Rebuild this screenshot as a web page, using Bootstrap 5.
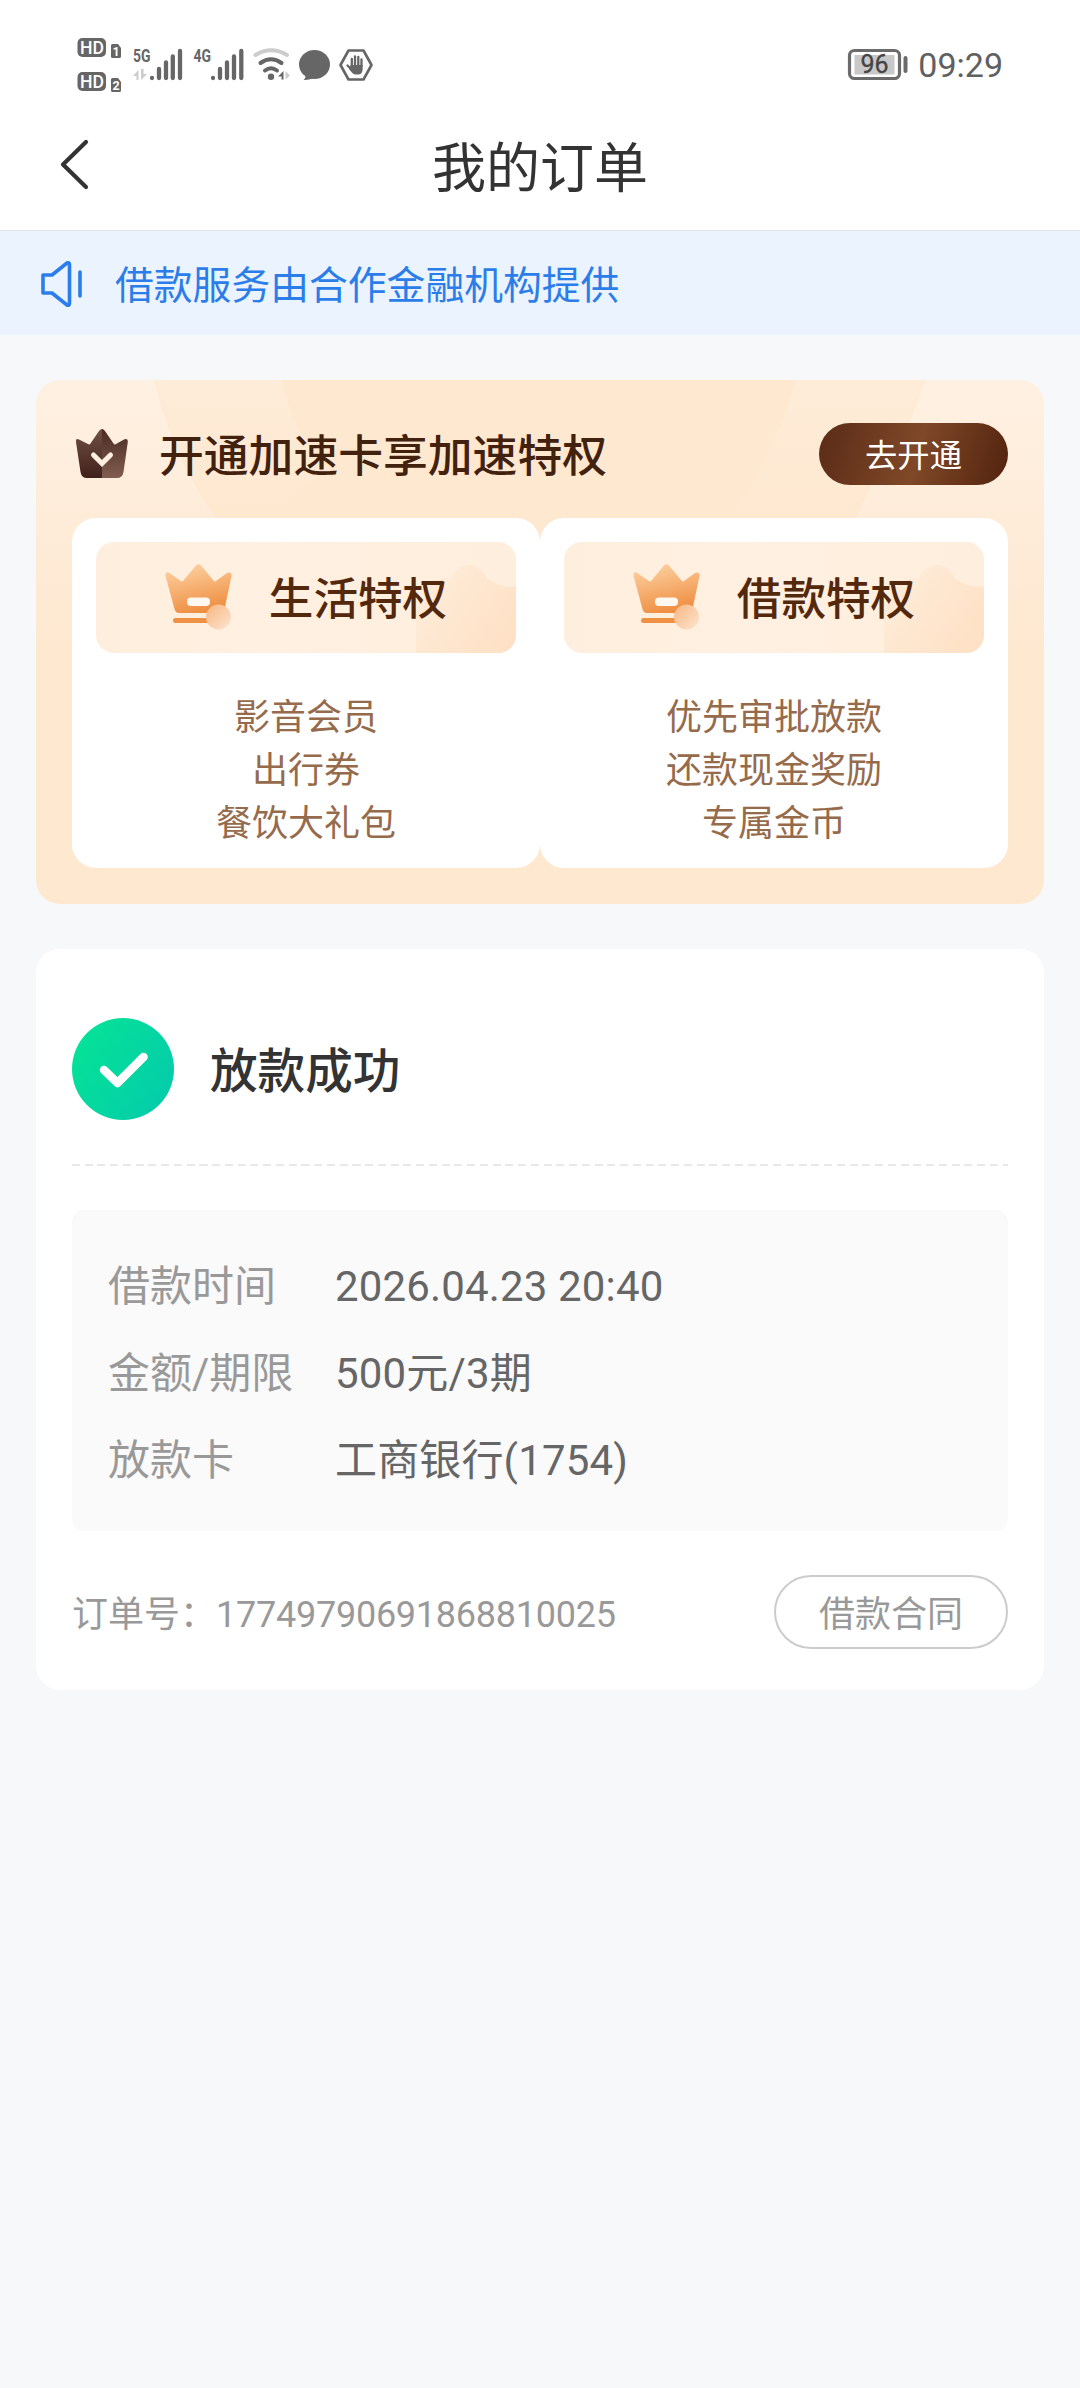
<!DOCTYPE html>
<html lang="zh-CN">
<head>
<meta charset="utf-8">
<meta name="viewport" content="width=device-width, initial-scale=1">
<title>我的订单</title>
<link href="https://cdn.jsdelivr.net/npm/bootstrap@5.3.0/dist/css/bootstrap.min.css" rel="stylesheet">
<style>
body{font-family:Roboto,"Noto Sans CJK SC",sans-serif;background:#f6f8fa;color:#333;min-height:2388px;line-height:1}
svg{display:block;flex:none}
.status-bar{height:110px;padding:20px 77px 0 60px;color:#666}
.clock{font-size:34px;line-height:91px;color:#606060}
.title-bar{height:121px;border-bottom:1px solid #dde4ec;padding:0 60px}
.title-bar h1{font-size:54px;line-height:80px;color:#333;margin-top:20px}
.title-bar .side{width:40px}
.title-bar .side svg{margin-top:27px}
.notice{height:104px;background:#eaf3fe;color:#2b7de9;padding-left:40px;font-size:38.8px}
.notice svg{margin-top:3px}
.notice span{margin-left:31px}
.page-body{padding:45px 36px 0}
.promo{height:524px;border-radius:24px;background:#fee8d0;padding:43px 36px 36px}
.promo-bg{top:0;left:0}
.promo-head{height:62px;margin-bottom:33px}
.promo-title{font-size:44.8px;font-weight:500;color:#42210f;margin-left:31px}
.btn-open{width:189px;height:62px;font-size:32.3px;color:#fff;background:linear-gradient(105deg,#5c2c18 2%,#7f4828 52%,#54240f 98%)}
.perk{height:350px;border-radius:24px;padding:24px}
.perk-head{height:111px;border-radius:18px;background:linear-gradient(90deg,#feeedd,#fff0e1 40%,#feeedd);margin-bottom:39px}
.perk-head strong{font-size:44.6px;font-weight:500;color:#54280c;margin-left:36px}
.perk-list{font-size:36px;line-height:53px;color:#966b4c}
.order{height:741px;border-radius:24px;margin-top:45px;padding:69px 36px 0}
.order h2{font-size:47.6px;font-weight:500;color:#333;margin-left:36px}
.dash{height:2px;background:repeating-linear-gradient(90deg,#e9e9e9 0 8px,transparent 8px 12.75px);margin:44px 0}
.info{height:321px;border-radius:12px;background:#fafafa;padding:33px 36px 0;font-size:42px}
.info dt{width:227px;font-weight:400;color:#999}
.info dd{color:#666;letter-spacing:.15px}
.info .line{height:87px}
.order-no{font-size:36px;color:#999}
.order-no .num{letter-spacing:-.25px}
.btn-contract{width:234px;height:74px;border:2px solid #ccc;font-size:36px;color:#999;background:#fff}
.order-foot{margin-top:44px}
.lh-box{line-height:1.4;padding-top:6px}
.btn.pt-label{padding:5px 0 0}
</style>
</head>
<body>
<svg width="0" height="0" class="position-absolute">
  <defs>
    <linearGradient id="crownFill" x1=".3" y1="0" x2=".6" y2="1"><stop offset="0" stop-color="#fdd0a0"/><stop offset="1" stop-color="#ee8c3e"/></linearGradient>
    <linearGradient id="coinFill" x1="0" y1="0" x2="1" y2="1"><stop offset="0" stop-color="#f7b682"/><stop offset="1" stop-color="#fee5cf"/></linearGradient>
    <linearGradient id="cloudFill" x1="0" y1=".2" x2="1" y2=".8"><stop offset="0" stop-color="#feedda"/><stop offset=".5" stop-color="#fee6cf"/><stop offset="1" stop-color="#fee1c5"/></linearGradient>
    <g id="crown">
      <path d="M3.5 8.5 L16 17 Q17.500 18 18.500 16.500 L31 1.500 Q33.500 -1 36 1.500 L48.500 16.500 Q49.500 18 51 17 L62 9 Q67 7 66.500 12 L59.500 45 Q58.500 49 55 49 H14 Q10.500 49 9.500 45 L0.500 12 Q0 7.500 3.500 8.500Z" fill="url(#crownFill)"/>
      <rect x="22" y="33.500" width="23" height="8.500" rx="4" fill="#fff8f1"/>
      <rect x="8" y="54" width="40" height="5" rx="2.500" fill="#ef9145"/>
      <circle cx="53.500" cy="53" r="12.500" fill="url(#coinFill)"/>
    </g>
    <g id="perkShade">
      <path d="M320 111 V70 Q335 30 354 37 Q362 22 375 23 Q386 25 391 37 Q405 45 420 44 V111Z" fill="url(#cloudFill)"/>
      <circle cx="414" cy="12" r="33" fill="#feeddd" opacity=".8"/>
    </g>
  </defs>
</svg>

<header class="bg-white">
  <div class="status-bar d-flex justify-content-between">
    <div class="d-flex">
      <svg width="66" height="90" viewBox="0 0 66 90" fill="#666" font-family="Roboto" font-weight="700">
        <rect x="17.500" y="18" width="28.500" height="19" rx="5"/><rect x="17.500" y="52" width="28.500" height="19" rx="5"/>
        <path d="M52.500 24H58L61 28V36.500Q61 38 59.500 38H52.500Q51 38 51 36.500V25.500Q51 24 52.500 24ZM52.500 58H58L61 62V70.500Q61 72 59.500 72H52.500Q51 72 51 70.500V59.500Q51 58 52.500 58Z"/>
        <g fill="#fff"><text x="20" y="33.500" font-size="17.500" font-weight="500" textLength="24" lengthAdjust="spacingAndGlyphs">HD</text><text x="20" y="67.500" font-size="17.500" font-weight="500" textLength="24" lengthAdjust="spacingAndGlyphs">HD</text><text x="52.500" y="35.800" font-size="12.500">1</text><text x="52.600" y="69.800" font-size="12.500">2</text></g>
      </svg>
      <svg width="62" height="90" viewBox="66 0 62 90" fill="#666">
        <text x="73" y="42" font-family="Roboto" font-weight="700" font-size="19" textLength="17.500" lengthAdjust="spacingAndGlyphs">5G</text>
        <path d="M78.500 60V50L73 56H76.500V60ZM81 49V60L87 54H83.500V49Z" fill="#ccc"/>
        <path d="M92 58V58.100M99 49V58M106 42.500V58M112.800 36.500V58M120 31V58" stroke="#666" stroke-width="4.300" stroke-linecap="round"/>
      </svg>
      <svg width="60" height="90" viewBox="128 0 60 90" fill="#666">
        <text x="133.500" y="42" font-family="Roboto" font-weight="700" font-size="19" textLength="17.500" lengthAdjust="spacingAndGlyphs">4G</text>
        <path d="M153 58V58.100M160 49V58M167 42.500V58M174 36.500V58M181.300 31V58" stroke="#666" stroke-width="4.300" stroke-linecap="round"/>
      </svg>
      <svg width="46" height="90" viewBox="188 0 46 90" fill="none" stroke-linecap="round">
        <path d="M195.500 35Q211 25.500 227 35" stroke="#ccc" stroke-width="4"/>
        <path d="M200.500 43Q211 35.500 221.500 43M205 50.500Q211 46 217 50.500" stroke="#666" stroke-width="4"/>
        <circle cx="211" cy="56.700" r="3.200" fill="#666"/>
        <path d="M223.500 51V59.500H221.500V56.500H218Z" fill="#666"/><path d="M225.500 51V59.500L230 55.500Z" fill="#ccc"/>
      </svg>
      <svg width="40" height="90" viewBox="234 0 40 90" fill="#666"><ellipse cx="254.500" cy="44.500" rx="15.500" ry="14.500"/><path d="M244 52 Q247 57 243.500 60 Q252 60 257 56Z"/></svg>
      <svg width="56" height="90" viewBox="274 0 56 90" fill="none" stroke="#666" stroke-linecap="round" stroke-linejoin="round">
        <path d="M288.500 30.500H303.500L311.500 45L303.500 59.500H288.500L280.500 45Z" stroke-width="2.600"/>
        <path d="M291.800 46V39M295 45V36.500M298.300 45V37M301.500 46V39.500M287.500 45.500L292 50" stroke-width="2.300"/>
        <path d="M290.700 45H302.600V49Q302.600 54.500 298 54.500H295.500Q293 54.500 289 49Z" fill="#666" stroke="none"/>
      </svg>
    </div>
    <div class="d-flex">
      <svg width="89" height="90" viewBox="0 0 89 90">
        <rect x="20.500" y="30.500" width="50" height="28" rx="5" fill="#fff" stroke="#6b6b6b" stroke-width="3.200"/><rect x="25.500" y="35" width="40" height="19.500" fill="#c8c8c8"/>
        <text x="45.500" y="53" text-anchor="middle" font-family="Roboto" font-size="25" fill="#444" stroke="#444" stroke-width=".3">96</text>
        <rect x="74.500" y="36" width="4" height="17" rx="2" fill="#6b6b6b"/>
      </svg>
      <span class="clock">09:29</span>
    </div>
  </div>
  <nav class="title-bar d-flex justify-content-between">
    <div class="side"><svg width="32" height="54" viewBox="0 0 32 54" fill="none" stroke="#333" stroke-width="4.200" stroke-linecap="round" stroke-linejoin="round"><path d="M26 5L3 27.500L26 50"/></svg></div>
    <h1 class="mb-0 fw-normal">我的订单</h1>
    <div class="side"></div>
  </nav>
</header>

<div class="notice d-flex align-items-center">
  <svg width="44" height="50" viewBox="0 0 44 50" fill="none" stroke="#2b7de9" stroke-width="3.600" stroke-linecap="round" stroke-linejoin="round"><path d="M3 15H12L27 3Q29.500 2 29.500 5V43Q29.500 46 27 45L12 33H3Z"/><path d="M40 12V36"/></svg>
  <span class="lh-box text-nowrap">借款服务由合作金融机构提供</span>
</div>

<main class="page-body">
  <section class="promo position-relative overflow-hidden">
    <svg class="promo-bg position-absolute" width="1008" height="524" viewBox="0 0 1008 524">
      <defs>
        <linearGradient id="fadeDown" x1="0" y1="0" x2="0" y2="1"><stop offset="0" stop-color="#fff5ec" stop-opacity=".65"/><stop offset="1" stop-color="#fff5ec" stop-opacity="0"/></linearGradient>
        <linearGradient id="rayDown" x1="0" y1="0" x2="0" y2="1"><stop offset="0" stop-color="#fff3e6" stop-opacity=".38"/><stop offset="1" stop-color="#fff3e6" stop-opacity="0"/></linearGradient>
      </defs>
      <path d="M0 0H118Q135 75 180 138L240 270H0Z" fill="url(#fadeDown)"/>
      <path d="M118 0H246Q256 50 290 90L240 130H176Q135 75 118 0Z" fill="url(#rayDown)"/>
      <path d="M1008 0H890Q870 60 835 105L760 270H1008Z" fill="url(#fadeDown)"/>
      <path d="M890 0H760Q740 75 690 138H810Q870 70 890 0Z" fill="url(#rayDown)"/>
    </svg>
    <div class="promo-head position-relative d-flex align-items-center">
      <svg width="56" height="52" viewBox="0 0 56 52">
        <defs><linearGradient id="darkL" x1="0" y1="0" x2="0" y2="1"><stop offset="0" stop-color="#705044"/><stop offset="1" stop-color="#40201a"/></linearGradient><linearGradient id="darkR" x1="0" y1="0" x2="0" y2="1"><stop offset="0" stop-color="#4b2b21"/><stop offset="1" stop-color="#805d50"/></linearGradient></defs>
        <path d="M30 1Q28.500 1 27 3L18.500 15.500Q17.500 17 16 16L7 11.500Q3.500 10 4 14L8.500 44Q9.500 50 15 50H30Z" fill="url(#darkL)"/>
        <path d="M30 1Q31.500 1 33 3L41.500 15.500Q42.500 17 44 16L52 11.500Q56 10 55.800 14L51.500 44Q50.500 50 45 50H30Z" fill="url(#darkR)"/>
        <path d="M21.500 27L30 35.500L38.500 27" fill="none" stroke="#feefe1" stroke-width="5" stroke-linecap="round"/>
      </svg>
      <span class="promo-title lh-box text-nowrap">开通加速卡享加速特权</span>
      <button type="button" class="btn btn-open rounded-pill border-0 pt-label ms-auto">去开通</button>
    </div>
    <div class="row g-0 position-relative">
      <div class="col-6"><div class="perk bg-white">
        <div class="perk-head position-relative overflow-hidden">
          <svg class="position-absolute top-0 start-0" width="420" height="111"><use href="#perkShade"/></svg>
          <div class="position-relative d-flex align-items-center justify-content-center h-100"><svg width="68" height="67" viewBox="0 0 68 67"><use href="#crown"/></svg><strong class="lh-box">生活特权</strong></div>
        </div>
        <ul class="perk-list list-unstyled text-center mb-0"><li>影音会员</li><li>出行券</li><li>餐饮大礼包</li></ul>
      </div></div>
      <div class="col-6"><div class="perk bg-white">
        <div class="perk-head position-relative overflow-hidden">
          <svg class="position-absolute top-0 start-0" width="420" height="111"><use href="#perkShade"/></svg>
          <div class="position-relative d-flex align-items-center justify-content-center h-100"><svg width="68" height="67" viewBox="0 0 68 67"><use href="#crown"/></svg><strong class="lh-box">借款特权</strong></div>
        </div>
        <ul class="perk-list list-unstyled text-center mb-0"><li>优先审批放款</li><li>还款现金奖励</li><li>专属金币</li></ul>
      </div></div>
    </div>
  </section>

  <section class="order bg-white">
    <div class="d-flex align-items-center">
      <svg width="102" height="102" viewBox="0 0 102 102"><defs><linearGradient id="okFill" x1="0" y1=".2" x2="1" y2=".8"><stop offset="0" stop-color="#05e396"/><stop offset="1" stop-color="#04cbab"/></linearGradient></defs><circle cx="51" cy="51" r="51" fill="url(#okFill)"/><path d="M32 52L45.500 65L71.500 39" fill="none" stroke="#fff" stroke-width="8.500" stroke-linecap="round" stroke-linejoin="round"/></svg>
      <h2 class="mb-0 lh-box">放款成功</h2>
    </div>
    <div class="dash"></div>
    <dl class="info mb-0">
      <div class="line d-flex align-items-center"><dt>借款时间</dt><dd class="mb-0">2026.04.23 20:40</dd></div>
      <div class="line d-flex align-items-center"><dt>金额/期限</dt><dd class="mb-0">500元/3期</dd></div>
      <div class="line d-flex align-items-center"><dt>放款卡</dt><dd class="mb-0">工商银行(1754)</dd></div>
    </dl>
    <div class="order-foot d-flex align-items-center justify-content-between">
      <span class="order-no lh-box">订单号：<span class="num">17749790691868810025</span></span>
      <button type="button" class="btn btn-contract rounded-pill pt-label">借款合同</button>
    </div>
  </section>
</main>
<script src="https://cdn.jsdelivr.net/npm/bootstrap@5.3.0/dist/js/bootstrap.bundle.min.js"></script>
</body>
</html>
